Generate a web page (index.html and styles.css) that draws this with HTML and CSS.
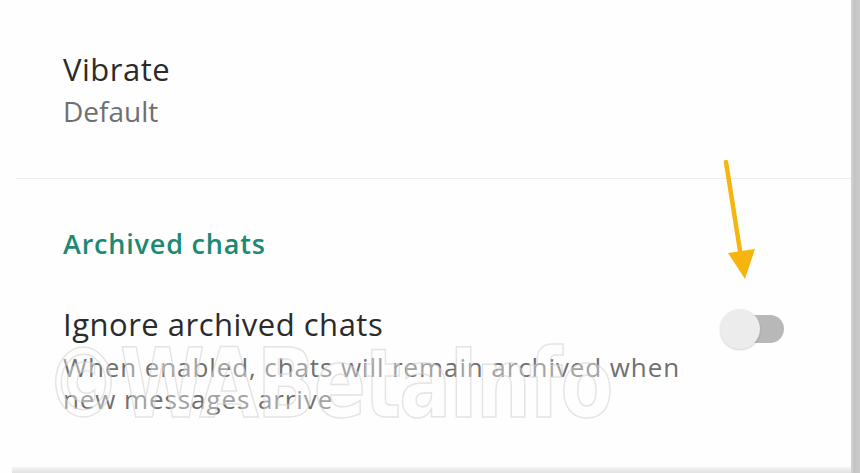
FILE: index.html
```html
<!DOCTYPE html>
<html>
<head>
    <title>Notification settings</title>
    <link rel="stylesheet" href="styles.css">
</head>
<body>
    <div class="screen">
        <div class="content">
            <div class="pref vibrate">
                <div class="pref-title">Vibrate</div>
                <div class="pref-value">Default</div>
            </div>

            <div class="divider"></div>

            <div class="section">
                <div class="section-title">Archived chats</div>
                <div class="pref-row">
                    <div class="pref-text">
                        <div class="pref-title">Ignore archived chats</div>
                        <div class="pref-summary">When enabled, chats will remain archived when<br>new messages arrive</div>
                    </div>
                    <div class="switch">
                        <div class="switch-track"></div>
                        <div class="switch-thumb"></div>
                    </div>
                </div>
            </div>

            <div class="bottom-edge"></div>

            <div class="watermark">&copy;WABetaInfo</div>

            <svg class="arrow" width="50" height="140" viewBox="0 0 50 140">
                <line x1="7" y1="7" x2="22" y2="102" stroke="#f6b40e" stroke-width="4.5" stroke-linecap="round"/>
                <polygon points="9,98 36,94 26,124" fill="#f6b40e"/>
            </svg>
        </div>
        <div class="scrollbar"></div>
    </div>
</body>
</html>
```

FILE: styles.css
```css
html, body { margin: 0; padding: 0; background: #fff; }
body { font-family: "Open Sans", "Noto Sans", sans-serif; width: 860px; height: 473px; overflow: hidden; }

.screen { display: flex; height: 473px; }
.content { flex: 1; display: flex; flex-direction: column; position: relative; background: #fefefe; }
.scrollbar { width: 9px; background: linear-gradient(90deg, #d4d4d4, #c4c4c4 40%, #cacaca); }

.pref { padding-left: 63px; }
.vibrate { padding-top: 49px; }
.pref-title { font-size: 31px; line-height: 40px; color: #2b2b2b; letter-spacing: 0.5px; }
.pref-value { font-size: 28px; line-height: 36px; color: #6f6f6f; margin-top: 4px; }

.divider { margin: 49px 0 0 16px; border-top: 1px solid #ededed; }

.section { padding: 47px 0 0 63px; }
.section-title { font-size: 27px; line-height: 36px; font-weight: 600; color: #1c8a72; letter-spacing: 0.8px; }

.pref-row { display: flex; align-items: flex-start; margin-top: 42px; }
.pref-text { flex: 1; }
.pref-summary { font-size: 26px; line-height: 32px; color: #707070; margin-top: 7px; letter-spacing: 0.9px; }

.switch { position: relative; width: 64px; height: 40px; margin: 5px 67px 0 0; }
.switch-track { position: absolute; left: 7px; right: 0; top: 6px; height: 28px; border-radius: 14px; background: #b8b8b8; }
.switch-thumb { position: absolute; left: 0; top: 0; width: 40px; height: 40px; border-radius: 50%; background: #ececec; box-shadow: 0 1px 2px rgba(0, 0, 0, 0.18); }

.bottom-edge { margin: auto 0 0 12px; height: 6px; background: linear-gradient(180deg, #f4f4f4, #e2e2e2); }

.watermark { position: absolute; left: 45px; top: 328px; font-family: "DejaVu Sans Condensed", "DejaVu Sans", sans-serif; font-weight: bold; font-size: 96px; letter-spacing: -2px; transform: scaleX(0.89); transform-origin: left top; color: rgba(255, 255, 255, 0.35); -webkit-text-stroke: 1.5px rgba(205, 205, 205, 0.55); pointer-events: none; }

.arrow { position: absolute; left: 719px; top: 155px; }
```
